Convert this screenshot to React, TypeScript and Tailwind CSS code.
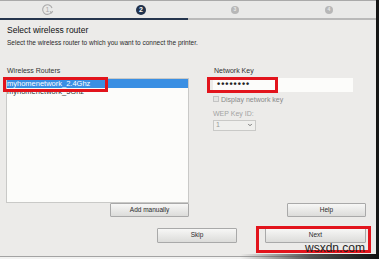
import { ChevronDown } from "lucide-react";

const FONT = { fontFamily: '"Liberation Sans", Arial, sans-serif' };

function StepOne() {
  return (
    <svg width="13" height="13" viewBox="0 0 13 13" fill="none">
      <path d="M10.6 9A4.8 4.8 0 1 1 11 5" stroke="#ababab" strokeWidth="1.1" />
      <path d="M9 8.4l1.6 1.4 1.1-1.8" stroke="#ababab" strokeWidth="1.1" />
      <text x="4.4" y="9" fontSize="7" fill="#a9a9a9" fontFamily="Liberation Sans">1</text>
    </svg>
  );
}

function Dot({ n, active }: { n: number; active?: boolean }) {
  return (
    <div
      className={
        active
          ? "flex h-[10px] w-[10px] items-center justify-center rounded-full bg-[#22334d] text-[7px] font-bold leading-none text-white"
          : "flex h-[8px] w-[8px] items-center justify-center rounded-full bg-[#b7b7b7] text-[5px] font-bold leading-none text-[#e8e8e8]"
      }
    >
      {n}
    </div>
  );
}

function Btn({ label, className }: { label: string; className: string }) {
  return (
    <div
      className={
        "flex items-center justify-center rounded-[1px] border border-[#a9a9a9] bg-gradient-to-b from-[#f7f7f6] to-[#dcdcda] text-[6.5px] text-[#2a2a2a] " +
        className
      }
    >
      {label}
    </div>
  );
}

export default function App() {
  return (
    <div className="relative flex h-[259px] w-[379px] overflow-hidden bg-[#ecebe9]" style={FONT}>
      <div className="flex w-[376px] flex-col">
        {/* steps */}
        <div className="border-t border-[#a9a9a9] bg-[#e9e9e8]">
          <div className="grid h-[17px] grid-cols-4 items-center justify-items-center">
            <StepOne />
            <Dot n={2} active />
            <Dot n={3} />
            <Dot n={4} />
          </div>
          <div className="flex h-[2px]">
            <div className="w-[188px] bg-[#24344d]" />
            <div className="flex-1 bg-[#b9b9b9]" />
          </div>
        </div>

        <div className="pl-[7px]">
          <div className="mt-[5px] h-[10px] text-[8.5px] leading-[10px] text-[#111]">Select wireless router</div>
          <div className="mt-[3px] h-[9px] text-[6.5px] leading-[9px] text-[#2a2a2a]">
            Select the wireless router to which you want to connect the printer.
          </div>
        </div>

        <div className="mt-[19px] flex">
          {/* left column */}
          <div className="ml-[6px] flex w-[183px] flex-col">
            <div className="h-[9px] pl-[1px] text-[7px] leading-[9px] text-[#333]">Wireless Routers</div>
            <div className="mt-[2.5px] h-[125px] border border-[#c9c9c7] bg-[#fcfcfa] pt-[0.5px]">
              <div className="h-[9px] bg-[#3a8fe3] text-[7.5px] leading-[9px] text-white">myhomenetwork_2.4Ghz</div>
              <div className="h-[9px] text-[7.5px] leading-[8px] text-[#333]">myhomenetwork_5Ghz</div>
            </div>
            <Btn label="Add manually" className="mt-0 h-[14px] w-[79px] self-end" />
          </div>

          {/* right column */}
          <div className="ml-[24px] flex w-[153px] flex-col">
            <div className="h-[9px] pl-[1px] text-[7px] leading-[9px] text-[#333]">Network Key</div>
            <div className="mt-[2.5px] flex h-[14px] w-[140px] items-center bg-[#fcfcfa] pl-[4px] text-[9px] font-bold tracking-[1px] text-[#222]">
              ••••••••
            </div>
            <div className="mt-[3px] flex h-[9px] items-center gap-[2px]">
              <div className="h-[6px] w-[6px] border border-[#c4c4c4] bg-[#e4e4e2]" />
              <span className="text-[7px] leading-[9px] text-[#8a8a8a]">Display network key</span>
            </div>
            <div className="mt-[5px] h-[9px] text-[7px] leading-[9px] text-[#a3a3a3]">WEP Key ID:</div>
            <div className="mt-[2px] flex h-[11px] w-[43px] items-center justify-between border border-[#c9c9c7] bg-[#efefed] pl-[2px] pr-[2px] text-[7px] text-[#9a9a9a]">
              <span>1</span>
              <ChevronDown className="h-[6px] w-[6px] text-[#777]" strokeWidth={4} />
            </div>
            <Btn label="Help" className="mt-auto h-[14px] w-[79px] self-end" />
          </div>
        </div>

        <div className="mt-[11px] flex justify-end gap-[28px] pr-[10px]">
          <Btn label="Skip" className="h-[15px] w-[80px]" />
          <Btn label="Next" className="h-[15px] w-[101px]" />
        </div>

        <div className="mt-[13px] h-px bg-[#a3a3a3]" />
        <div className="flex-1 bg-[#f2f2f1]" />
      </div>
      <div className="w-[3px] bg-[#151515]" />

      {/* highlight overlays */}
      <div className="absolute left-[3px] top-[77px] h-[15px] w-[105px] border-[3px] border-[#e2141c]" />
      <div className="absolute left-[207px] top-[77px] h-[16px] w-[71px] border-[3px] border-[#e2141c]" />
      <div className="absolute left-[256px] top-[226px] h-[27px] w-[115px] border-[3px] border-[#e2141c]" />
      <div className="absolute bottom-0 left-[240px] right-0 h-[5px] bg-gradient-to-r from-transparent via-[#555] to-[#111]" />
      <div className="absolute left-[305px] top-[242px] text-[12px] leading-[12px] text-[#1e1e1e]">wsxdn.com</div>
    </div>
  );
}
